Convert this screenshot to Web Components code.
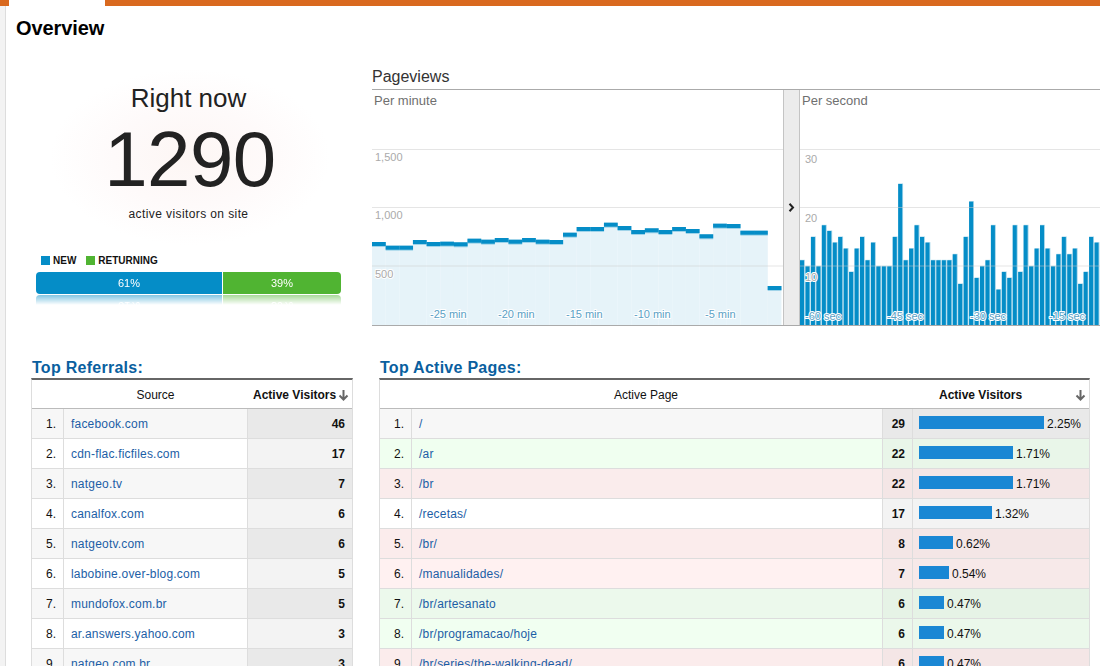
<!DOCTYPE html>
<html>
<head>
<meta charset="utf-8">
<title>Overview</title>
<style>
    html, body { margin: 0; padding: 0; height: 666px; overflow: hidden; background: #fff; }
</style>
</head>
<body>
<rt-app>
    <rt-now slot="now" visitors="1290" fresh="61" back="39"></rt-now>
    <rt-pageviews slot="views"></rt-pageviews>

    <rt-table slot="left" heading="Top Referrals:" label="Source" wide="no">
        <rt-row n="1" label="facebook.com" value="46" bg="#f7f7f7" bg2="#e9e9e9"></rt-row>
        <rt-row n="2" label="cdn-flac.ficfiles.com" value="17" bg="#fff" bg2="#f3f3f3"></rt-row>
        <rt-row n="3" label="natgeo.tv" value="7" bg="#f7f7f7" bg2="#e9e9e9"></rt-row>
        <rt-row n="4" label="canalfox.com" value="6" bg="#fff" bg2="#f3f3f3"></rt-row>
        <rt-row n="5" label="natgeotv.com" value="6" bg="#f7f7f7" bg2="#e9e9e9"></rt-row>
        <rt-row n="6" label="labobine.over-blog.com" value="5" bg="#fff" bg2="#f3f3f3"></rt-row>
        <rt-row n="7" label="mundofox.com.br" value="5" bg="#f7f7f7" bg2="#e9e9e9"></rt-row>
        <rt-row n="8" label="ar.answers.yahoo.com" value="3" bg="#fff" bg2="#f3f3f3"></rt-row>
        <rt-row n="9" label="natgeo.com.br" value="3" bg="#f7f7f7" bg2="#e9e9e9"></rt-row>
    </rt-table>

    <rt-table slot="right" heading="Top Active Pages:" label="Active Page" wide="yes">
        <rt-row n="1" label="/" value="29" pct="2.25%" bar="125" bg="#f7f7f7" bg2="#e9e9e9"></rt-row>
        <rt-row n="2" label="/ar" value="22" pct="1.71%" bar="94" bg="#f0fff0" bg2="#e9f6e9"></rt-row>
        <rt-row n="3" label="/br" value="22" pct="1.71%" bar="94" bg="#faecec" bg2="#f4e6e6"></rt-row>
        <rt-row n="4" label="/recetas/" value="17" pct="1.32%" bar="73" bg="#fff" bg2="#f3f3f3"></rt-row>
        <rt-row n="5" label="/br/" value="8" pct="0.62%" bar="34" bg="#fbecec" bg2="#f4e6e6"></rt-row>
        <rt-row n="6" label="/manualidades/" value="7" pct="0.54%" bar="30" bg="#fff1f1" bg2="#f7e9e9"></rt-row>
        <rt-row n="7" label="/br/artesanato" value="6" pct="0.47%" bar="25" bg="#ecf9ec" bg2="#e6f3e6"></rt-row>
        <rt-row n="8" label="/br/programacao/hoje" value="6" pct="0.47%" bar="25" bg="#f1fff1" bg2="#ebf8eb"></rt-row>
        <rt-row n="9" label="/br/series/the-walking-dead/" value="6" pct="0.47%" bar="25" bg="#fbecec" bg2="#f4e6e6"></rt-row>
    </rt-table>
</rt-app>

<script>
class RtApp extends HTMLElement {
    constructor() {
        super();
        this.myRoot = this.attachShadow({mode: "open"});
        this.myRoot.innerHTML = `
        <style>
            :host {
                display: block;
                height: 666px;
                overflow: hidden;
                font-family: "Liberation Sans", Arial, sans-serif;
                color: #000;
            }
            .top {
                display: flex;
                height: 6px;
                background: #d9691f;
            }
            .top i {
                display: block;
                width: 96px;
                margin-left: 9px;
                background: #fff;
            }
            .body {
                display: flex;
            }
            .stripe {
                flex: none;
                width: 5px;
                height: 660px;
                background: #f3f3f3;
                border-right: 1px solid #ddd;
            }
            .main {
                flex: 1;
                min-width: 0;
            }
            h1 {
                margin: 0;
                padding-left: 10px;
                font-size: 20px;
                letter-spacing: -.1px;
                line-height: 44px;
                height: 44px;
            }
            .upper {
                display: flex;
                gap: 31px;
                height: 307px;
                margin-left: 30px;
            }
            .lower {
                display: flex;
                gap: 26px;
                margin-left: 25px;
            }
        </style>
        <div class="top"><i></i></div>
        <div class="body">
            <div class="stripe"></div>
            <div class="main">
                <h1>Overview</h1>
                <div class="upper">
                    <slot name="now"></slot>
                    <slot name="views"></slot>
                </div>
                <div class="lower">
                    <slot name="left"></slot>
                    <slot name="right"></slot>
                </div>
            </div>
        </div>
        `;
    }
}

class RtNow extends HTMLElement {
    constructor() {
        super();
        this.myRoot = this.attachShadow({mode: "open"});
    }

    connectedCallback() {
        const fresh = this.getAttribute("fresh");
        const back = this.getAttribute("back");
        this.myRoot.innerHTML = `
        <style>
            :host {
                display: block;
                flex: none;
                width: 305px;
                background: radial-gradient(ellipse 140px 88px at 154px 107px, #fdf6f4 0%, #fefafa 55%, #fff 100%);
                text-align: center;
                color: #222;
            }
            .right { padding-top: 33px; font-size: 26px; line-height: 30px; }
            .count { margin-top: 6px; padding-left: 3px; font-size: 78px; line-height: 80px; letter-spacing: -.5px; }
            .sub { margin-top: 7px; font-size: 12px; letter-spacing: .4px; line-height: 16px; color: #222; }
            .legend {
                display: flex;
                align-items: center;
                margin: 32px 0 0 5px;
                height: 12px;
                font-size: 10px;
                font-weight: bold;
                color: #111;
            }
            .legend b { width: 9px; height: 9px; margin-right: 3px; }
            .legend span { margin-right: 10px; }
            .split {
                display: flex;
                gap: 1px;
                height: 22px;
                margin-top: 6px;
                color: #fff;
                font-size: 11px;
                line-height: 22px;
                -webkit-box-reflect: below 1px linear-gradient(transparent 55%, rgba(255,255,255,.5));
            }
            .new { width: 186px; background: #058dc7; border-radius: 4px 0 0 4px; }
            .ret { flex: 1; background: #50b432; border-radius: 0 4px 4px 0; }
        </style>
        <div class="right">Right now</div>
        <div class="count">${this.getAttribute("visitors")}</div>
        <div class="sub">active visitors on site</div>
        <div class="legend">
            <b style="background:#058dc7"></b><span>NEW</span>
            <b style="background:#50b432"></b><span>RETURNING</span>
        </div>
        <div class="split">
            <div class="new">${fresh}%</div>
            <div class="ret">${back}%</div>
        </div>
        `;
    }
}

class RtPageviews extends HTMLElement {
    constructor() {
        super();
        this.myRoot = this.attachShadow({mode: "open"});
        this.myRoot.innerHTML = `
        <style>
            :host {
                display: block;
                flex: 1;
                min-width: 0;
            }
            h2 {
                margin: 0;
                padding-top: 17px;
                font-size: 16px;
                font-weight: normal;
                line-height: 20px;
                height: 22px;
                color: #333;
            }
            .charts {
                display: flex;
                height: 235px;
                border-top: 1px solid #aaa;
                border-bottom: 1px solid #aaa;
            }
            .handle {
                flex: none;
                width: 15px;
                display: flex;
                align-items: center;
                justify-content: center;
                background: #ececec;
                border-left: 1px solid #c4c4c4;
                border-right: 1px solid #c4c4c4;
            }
        </style>
        <h2>Pageviews</h2>
        <div class="charts">
            <rt-minute-chart></rt-minute-chart>
            <div class="handle">
                <svg width="7" height="9" viewBox="0 0 7 9"><path d="M1.5 .8 L5 4.5 L1.5 8.2" fill="none" stroke="#222" stroke-width="2"/></svg>
            </div>
            <rt-second-chart></rt-second-chart>
        </div>
        `;
    }
}

const chartStyle = `
    :host { display: block; flex: none; height: 235px; overflow: hidden; }
    svg { display: block; font-family: "Liberation Sans", Arial, sans-serif; }
    .title { font-size: 13px; fill: #6f6f6f; }
    .axis { font-size: 11px; fill: #aaa; paint-order: stroke; stroke: #fff; stroke-width: 2px; stroke-linejoin: round; }
    .time { font-size: 11px; fill: #5a9fc5; paint-order: stroke; stroke: #fff; stroke-width: 2px; stroke-linejoin: round; }
`;

// the y values were read per step off the chart, page coordinates minus top of chart
class RtMinuteChart extends HTMLElement {
    constructor() {
        super();
        this.myRoot = this.attachShadow({mode: "open"});
        const levels = [244, 247.7, 247.7, 242, 244, 243.7, 244.3, 240.7, 241.7, 240, 241.7, 240, 241.7, 242, 234.7, 229, 229, 224.7, 228, 232, 230.3, 232, 229, 231, 236.3, 225.7, 226, 232.7, 232.7, 288];
        const pitch = 13.644;
        let fill = "";
        let bands = "";
        levels.forEach((y, i) => {
            const x = (i * pitch).toFixed(2);
            const top = y - 90;
            fill += `<rect x="${x}" y="${top}" width="${pitch + .1}" height="${235 - top}" fill="#e6f3f9"/>`;
            bands += `<rect x="${x}" y="${top - 2}" width="${pitch + .1}" height="5" fill="#9fd3e9"/>`;
        });
        levels.forEach((y, i) => {
            bands += `<rect x="${(i * pitch).toFixed(2)}" y="${y - 92}" width="${pitch + .1}" height="4" fill="#058dc7"/>`;
        });
        const grid = [59.5, 117.5, 176].map(y => `<line x1="0" x2="411" y1="${y}" y2="${y}" stroke="#ccc" stroke-opacity=".5"/>`).join("");
        const times = [[58, "-25 min"], [126, "-20 min"], [194, "-15 min"], [262, "-10 min"], [333, "-5 min"]];
        this.myRoot.innerHTML = `
        <style>${chartStyle} :host { width: 411px; }</style>
        <svg width="411" height="235">
            ${fill}${bands}${grid}
            <text class="title" x="2" y="14.5">Per minute</text>
            <text class="axis" x="3" y="71">1,500</text>
            <text class="axis" x="3" y="129">1,000</text>
            <text class="axis" x="3" y="188">500</text>
            ${times.map(t => `<text class="time" x="${t[0]}" y="228">${t[1]}</text>`).join("")}
        </svg>
        `;
    }
}

class RtSecondChart extends HTMLElement {
    constructor() {
        super();
        this.myRoot = this.attachShadow({mode: "open"});
        // bar tops from the reference at 3x, offset below
        const tops = [526,544,456,544,421,438,473,456,491,561,491,456,526,473,544,544,544,456,297,526,491,421,456,473,526,526,526,526,508,597,456,350,579,544,526,421,614,561,579,421,561,421,544,491,421,491,544,508,456,508,491,597,561,456,473];
        const pitch = 5.4545;
        let bars = "";
        tops.forEach((z, i) => {
            const x = i * pitch;
            const top = 85 + z / 3 - 90;
            bars += `<rect x="${x.toFixed(2)}" y="${(top - .5).toFixed(2)}" width="4.9" height="${(235.5 - top).toFixed(2)}" fill="#9fd3e9"/>`;
            bars += `<rect x="${x.toFixed(2)}" y="${top.toFixed(2)}" width="4" height="${(235 - top).toFixed(2)}" fill="#058dc7"/>`;
        });
        const grid = [59.5, 117.5, 176].map(y => `<line x1="0" x2="300" y1="${y}" y2="${y}" stroke="#ccc" stroke-opacity=".5"/>`).join("");
        const times = [[5, "-60 sec"], [87, "-45 sec"], [170, "-30 sec"], [249, "-15 sec"]];
        this.myRoot.innerHTML = `
        <style>${chartStyle} :host { flex: 1; min-width: 0; }</style>
        <svg width="300" height="235">
            ${bars}${grid}
            <text class="title" x="2" y="14.5">Per second</text>
            <text class="axis" x="5" y="73">30</text>
            <text class="axis" x="5" y="132">20</text>
            <text class="axis" x="5" y="191">10</text>
            ${times.map(t => `<text class="time" x="${t[0]}" y="229.5">${t[1]}</text>`).join("")}
        </svg>
        `;
    }
}

class RtTable extends HTMLElement {
    constructor() {
        super();
        this.myRoot = this.attachShadow({mode: "open"});
    }

    connectedCallback() {
        const wide = this.getAttribute("wide") === "yes";
        const arrow = `<svg width="11" height="12" viewBox="0 0 11 12"><path d="M5.5 1 V10.5 M1.5 6.5 L5.5 10.5 L9.5 6.5" fill="none" stroke="#666" stroke-width="2"/></svg>`;
        this.myRoot.innerHTML = `
        <style>
            :host {
                display: block;
                flex: none;
                width: ${wide ? 711 : 322}px;
                font-size: 12px;
            }
            h3 {
                margin: 0;
                padding: 1px 0 0 1px;
                font-size: 16px;
                letter-spacing: .27px;
                line-height: 20px;
                color: #0a5f9f;
            }
            .box {
                border-top: 2px solid #666;
                border-left: 1px solid #ddd;
                border-right: 1px solid #ddd;
            }
            .head {
                display: grid;
                grid-template-columns: ${wide ? "32px 471px 29px 1fr" : "32px 183px 1fr"};
                align-items: center;
                height: 27px;
                padding-top: 1px;
                border-bottom: 1px solid #bbb;
                color: #111;
            }
            .src { grid-column: 2; text-align: center; padding-right: ${wide ? 3 : 0}px; }
            .act {
                grid-column: ${wide ? 4 : 3};
                display: flex;
                align-items: center;
                justify-content: space-between;
                font-weight: bold;
                padding: ${wide ? "0 3px 0 27px" : "0 3px 0 6px"};
            }
            .act svg { flex: none; }
        </style>
        <h3>${this.getAttribute("heading")}</h3>
        <div class="box">
            <div class="head">
                <div class="src">${this.getAttribute("label")}</div>
                <div class="act"><span>Active Visitors</span>${arrow}</div>
            </div>
            <slot></slot>
        </div>
        `;
    }
}

class RtRow extends HTMLElement {
    constructor() {
        super();
        this.myRoot = this.attachShadow({mode: "open"});
    }

    connectedCallback() {
        const pct = this.getAttribute("pct");
        const bg = this.getAttribute("bg");
        const bg2 = this.getAttribute("bg2");
        const columns = pct ? "32px 471px 29px 1fr" : "32px 183px 1fr";
        let barCell = "";
        if(pct) {
            barCell = `
            <div class="share" style="background:${bg2}">
                <i style="width:${this.getAttribute("bar")}px"></i><span>${pct}</span>
            </div>`;
        }
        this.myRoot.innerHTML = `
        <style>
            :host {
                display: grid;
                grid-template-columns: ${columns};
                grid-template-rows: 29px;
                height: 29px;
                border-bottom: 1px solid #ddd;
                font-size: 12px;
                color: #111;
            }
            div { box-sizing: border-box; white-space: nowrap; overflow: hidden; line-height: 31px; }
            .n { text-align: right; padding-right: 7px; border-right: 1px solid #ddd; }
            .label { padding-left: 7px; color: #1c5ea6; letter-spacing: .2px; ${pct ? "border-right: 1px solid #ddd;" : ""} }
            .value { text-align: right; padding-right: 7px; font-weight: bold; }
            .share { display: flex; align-items: center; padding-left: 6px; border-left: 1px solid #ddd; }
            .share i { display: block; height: 13px; margin: 0 3px 2px 0; background: #1a87d4; }
            .share span { line-height: 16px; margin-top: 1px; }
            .bare { border-left: 1px solid #ddd; }
        </style>
        <div class="n" style="background:${bg}">${this.getAttribute("n")}.</div>
        <div class="label" style="background:${bg}">${this.getAttribute("label")}</div>
        <div class="value ${pct ? "" : "bare"}" style="background:${bg2}">${this.getAttribute("value")}</div>
        ${barCell}
        `;
    }
}

window.customElements.define("rt-minute-chart", RtMinuteChart);
window.customElements.define("rt-second-chart", RtSecondChart);
window.customElements.define("rt-row", RtRow);
window.customElements.define("rt-table", RtTable);
window.customElements.define("rt-pageviews", RtPageviews);
window.customElements.define("rt-now", RtNow);
window.customElements.define("rt-app", RtApp);
</script>
</body>
</html>
